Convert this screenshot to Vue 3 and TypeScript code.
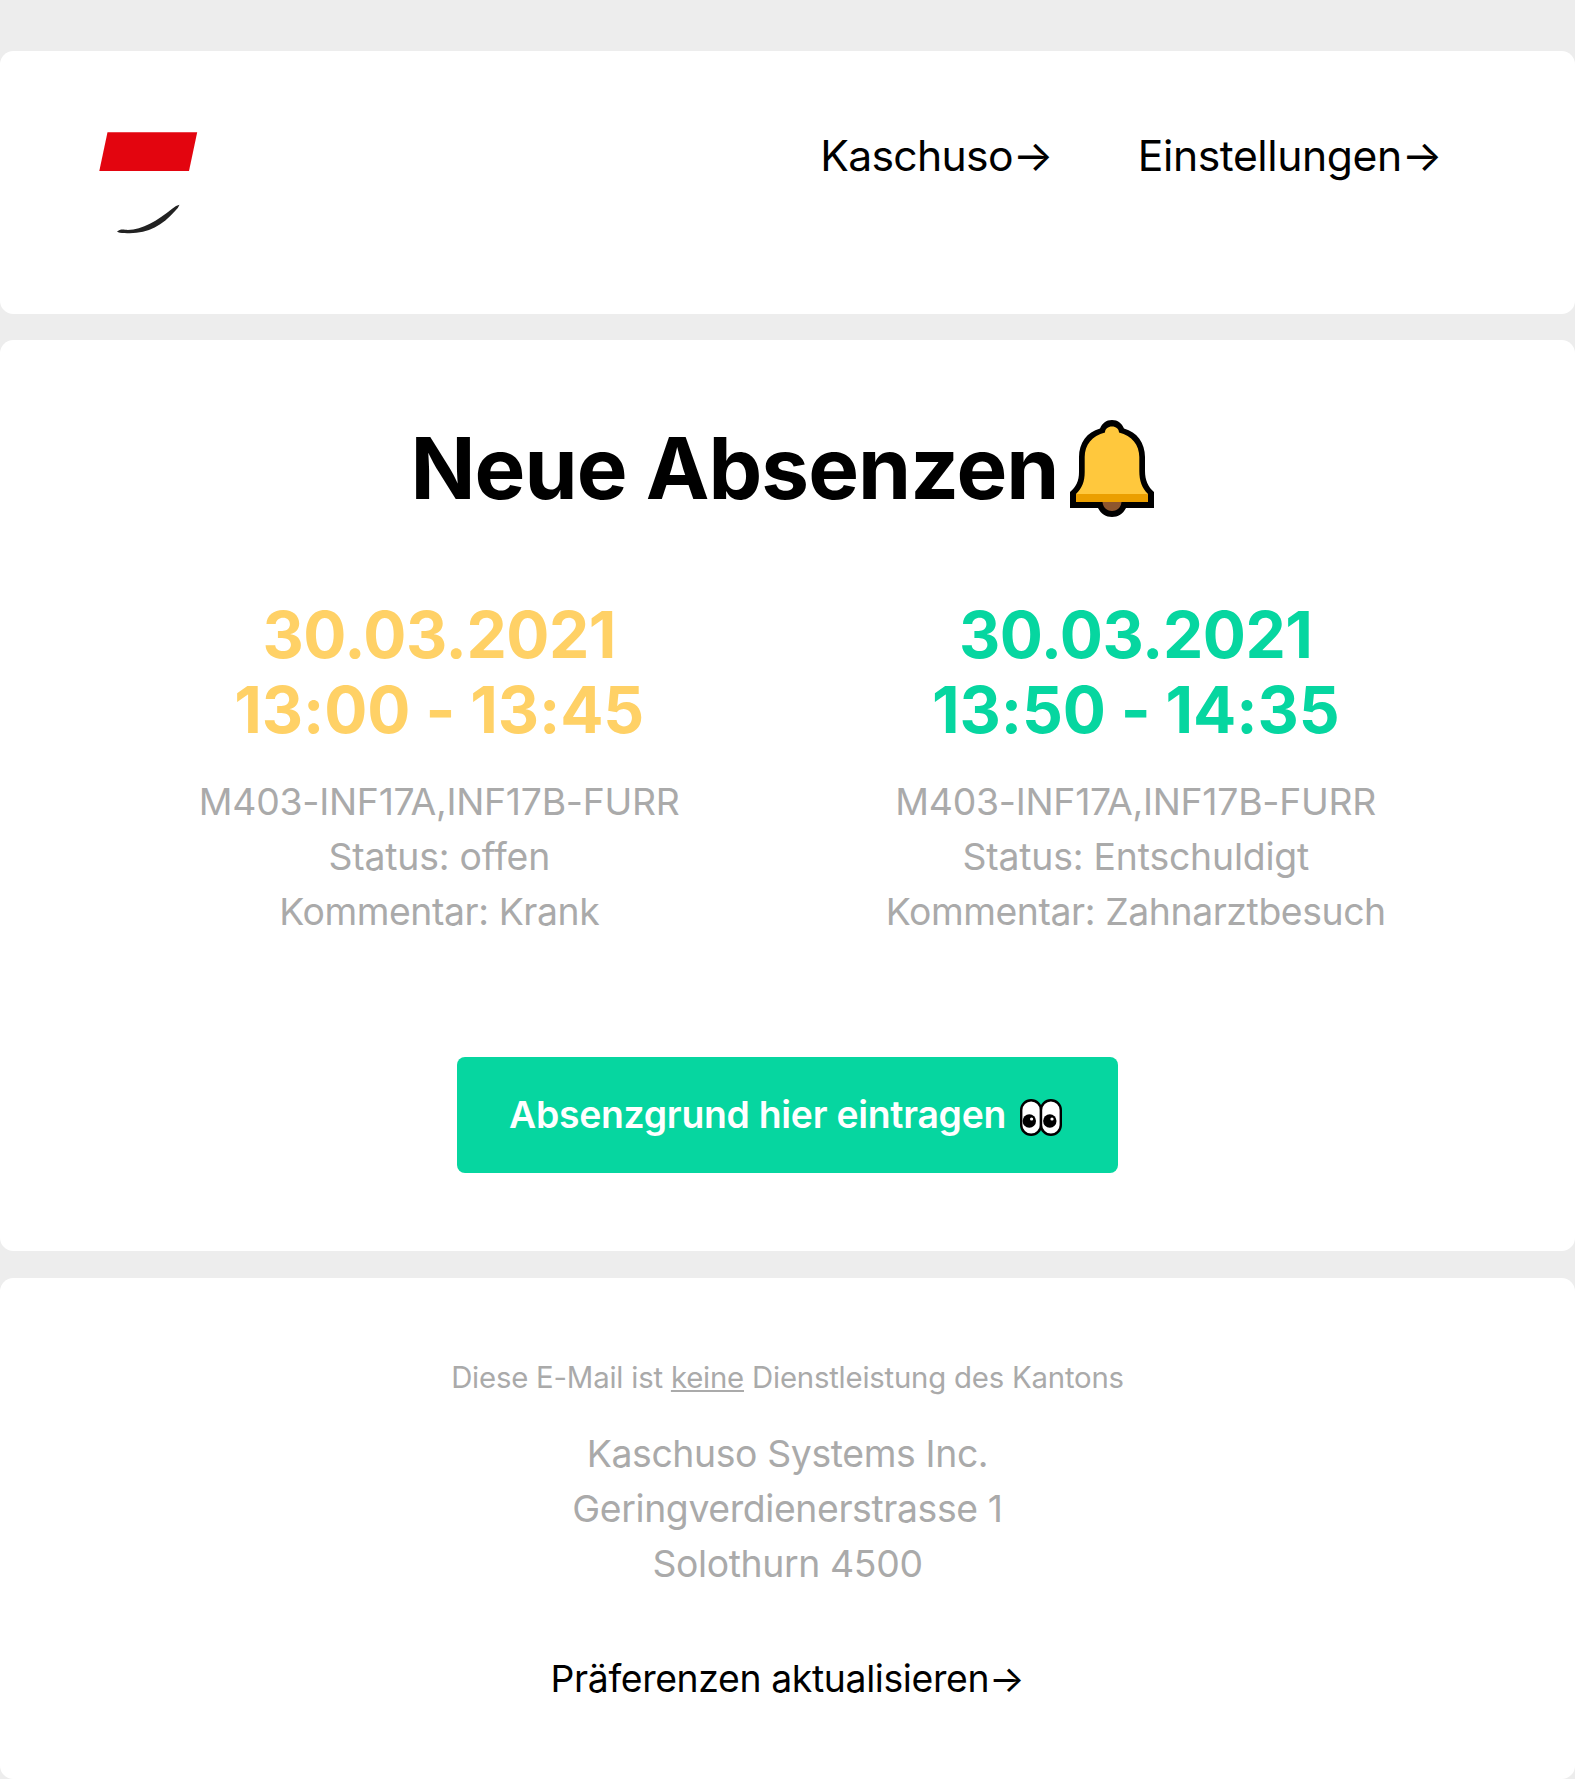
<script setup lang="ts">
interface Absence {
  date: string
  time: string
  lesson: string
  status: string
  comment: string
  excused: boolean
}

const absences: Absence[] = [
  { date: '30.03.2021', time: '13:00 - 13:45', lesson: 'M403-INF17A,INF17B-FURR', status: 'offen', comment: 'Krank', excused: false },
  { date: '30.03.2021', time: '13:50 - 14:35', lesson: 'M403-INF17A,INF17B-FURR', status: 'Entschuldigt', comment: 'Zahnarztbesuch', excused: true },
]
</script>

<template>
  <div class="mail">
    <header class="card header">
      <svg class="logo" viewBox="0 0 100 106" aria-hidden="true">
        <path d="M8.500 2.200H98.200L90 41H0.300Z" fill="#e3050f" />
        <path d="M18 101.700C20 99.800 23 99.300 26 99.800C42 101 57 91.500 73.500 78.500Q77 75.300 80.500 74.700Q79.500 77.500 76.500 80.500C62 97 47 104.500 25.500 103Q20 103 18 101.700Z" fill="#222" />
      </svg>
      <nav class="nav">
        <a class="home">Kaschuso→</a>
        <a>Einstellungen→</a>
      </nav>
    </header>

    <main class="card main">
      <h1>
        <span>Neue Absenzen</span>
        <svg class="bell" viewBox="0 0 84 97" aria-hidden="true">
          <path d="M42 0C36 0 32.500 3 30 8.500C17 12 9 23 9 37V52C9 61 6 67 0 72V88H28C31 94 36 97 42 97S53 94 56 88H84V72C78 67 75 60 75 51V37C75 23 67 12 54 8.500C51.500 3 48 0 42 0Z" fill="#000" />
          <path d="M42 6.500C38 6.500 35 9 35 12.500C22 15.500 14.700 25 14.700 37V52C14.700 62 12 68 6 74V77H78V74C72 68 69.300 61 69.300 51V37C69.300 25 62 15.500 49 12.500C49 9 46 6.500 42 6.500Z" fill="#ffc83d" />
          <path d="M6 74H78V82H6Z" fill="#eb9f00" />
          <path d="M32.500 82H51.500C51 87.500 47 91 42 91S33 87.500 32.500 82Z" fill="#8e562e" />
        </svg>
      </h1>
      <div class="absences">
        <section v-for="item in absences" :key="item.time" class="absence">
          <h2 :class="{ excused: item.excused }">
            <span class="date">{{ item.date }}</span>
            <span class="time">{{ item.time }}</span>
          </h2>
          <p>
            <span class="lesson">{{ item.lesson }}</span>
            <span class="status">Status: {{ item.status }}</span>
            <span class="comment">Kommentar: {{ item.comment }}</span>
          </p>
        </section>
      </div>
      <a class="button">
        <span>Absenzgrund hier eintragen</span>
        <svg class="eyes" viewBox="0 0 42 37" aria-hidden="true">
          <rect x="1.200" y="1.200" width="19.800" height="34.600" rx="9.900" fill="#fff" stroke="#000" stroke-width="2.400" />
          <rect x="21" y="1.200" width="19.800" height="34.600" rx="9.900" fill="#fff" stroke="#000" stroke-width="2.400" />
          <circle cx="9.300" cy="22" r="6.700" />
          <circle cx="29.800" cy="22" r="6.700" />
          <circle cx="11.600" cy="20" r="1.600" fill="#fff" />
          <circle cx="32" cy="20" r="1.600" fill="#fff" />
        </svg>
      </a>
    </main>

    <footer class="card footer">
      <p class="notice">Diese E-Mail ist <u>keine</u> Dienstleistung des Kantons</p>
      <p class="address">Kaschuso Systems Inc.<br />Geringverdienerstrasse 1<br />Solothurn 4500</p>
      <a class="preferences">Präferenzen aktualisieren→</a>
    </footer>
  </div>
</template>

<style>
body {
  margin: 0;
  background: #ededed;
}
</style>

<style scoped>
.mail {
  box-sizing: border-box;
  height: 1779px;
  padding-top: 51px;
  display: flex;
  flex-direction: column;
  font-family: Inter, sans-serif;
  font-size: 37.333px;
  line-height: 55px;
  color: #000;
  background: #ededed;
}
.card {
  box-sizing: border-box;
  background: #fff;
  border-radius: 13.333px;
}
.header {
  height: 263px;
  margin-bottom: 26px;
  padding: 79px 133px 0 99px;
  display: flex;
  justify-content: space-between;
  align-items: flex-start;
}
.logo {
  width: 100px;
  height: 106px;
}
.nav {
  display: flex;
  gap: 85px;
  margin-top: -6px;
  font-size: 42.667px;
  line-height: 64px;
  letter-spacing: -0.42px;
}
.home {
  letter-spacing: -0.7px;
}
.main {
  height: 911px;
  margin-bottom: 27px;
  padding: 68px 91px 0;
  display: flex;
  flex-direction: column;
  align-items: center;
}
h1 {
  margin: 0;
  display: flex;
  font-size: 85.333px;
  line-height: 120px;
  font-weight: 700;
  letter-spacing: -0.96px;
}
.bell {
  width: 84px;
  height: 97px;
  margin: 12px 10px 0 12px;
}
.absences {
  align-self: stretch;
  display: grid;
  grid-template-columns: 1fr 1fr;
  margin-top: 69px;
}
.absence {
  text-align: center;
}
.absence span {
  display: block;
}
h2 {
  margin: 0 0 27px;
  font-size: 64px;
  line-height: 75px;
  font-weight: 700;
  color: #ffd166;
}
h2.excused {
  color: #06d6a0;
}
.date {
  letter-spacing: -0.45px;
}
.time {
  letter-spacing: -0.12px;
}
.lesson {
  letter-spacing: -0.25px;
}
.status {
  letter-spacing: -0.17px;
}
.comment {
  letter-spacing: -0.4px;
}
p {
  margin: 0;
  color: #aaa;
}
.button {
  box-sizing: border-box;
  width: 661px;
  height: 116px;
  margin-top: 118px;
  padding: 0 0 2px 52px;
  display: flex;
  align-items: center;
  border-radius: 8px;
  background: #06d6a0;
  color: #fff;
  font-weight: 600;
  letter-spacing: -0.26px;
}
.eyes {
  width: 42px;
  height: 37px;
  margin: 6px 0 0 13.500px;
}
.footer {
  height: 501px;
  padding-top: 78px;
  text-align: center;
}
.notice {
  margin-bottom: 26px;
  font-size: 29.333px;
  line-height: 44px;
  letter-spacing: -0.2px;
}
.address,
.preferences {
  letter-spacing: -0.36px;
}
.preferences {
  display: block;
  margin-top: 60px;
}
</style>
